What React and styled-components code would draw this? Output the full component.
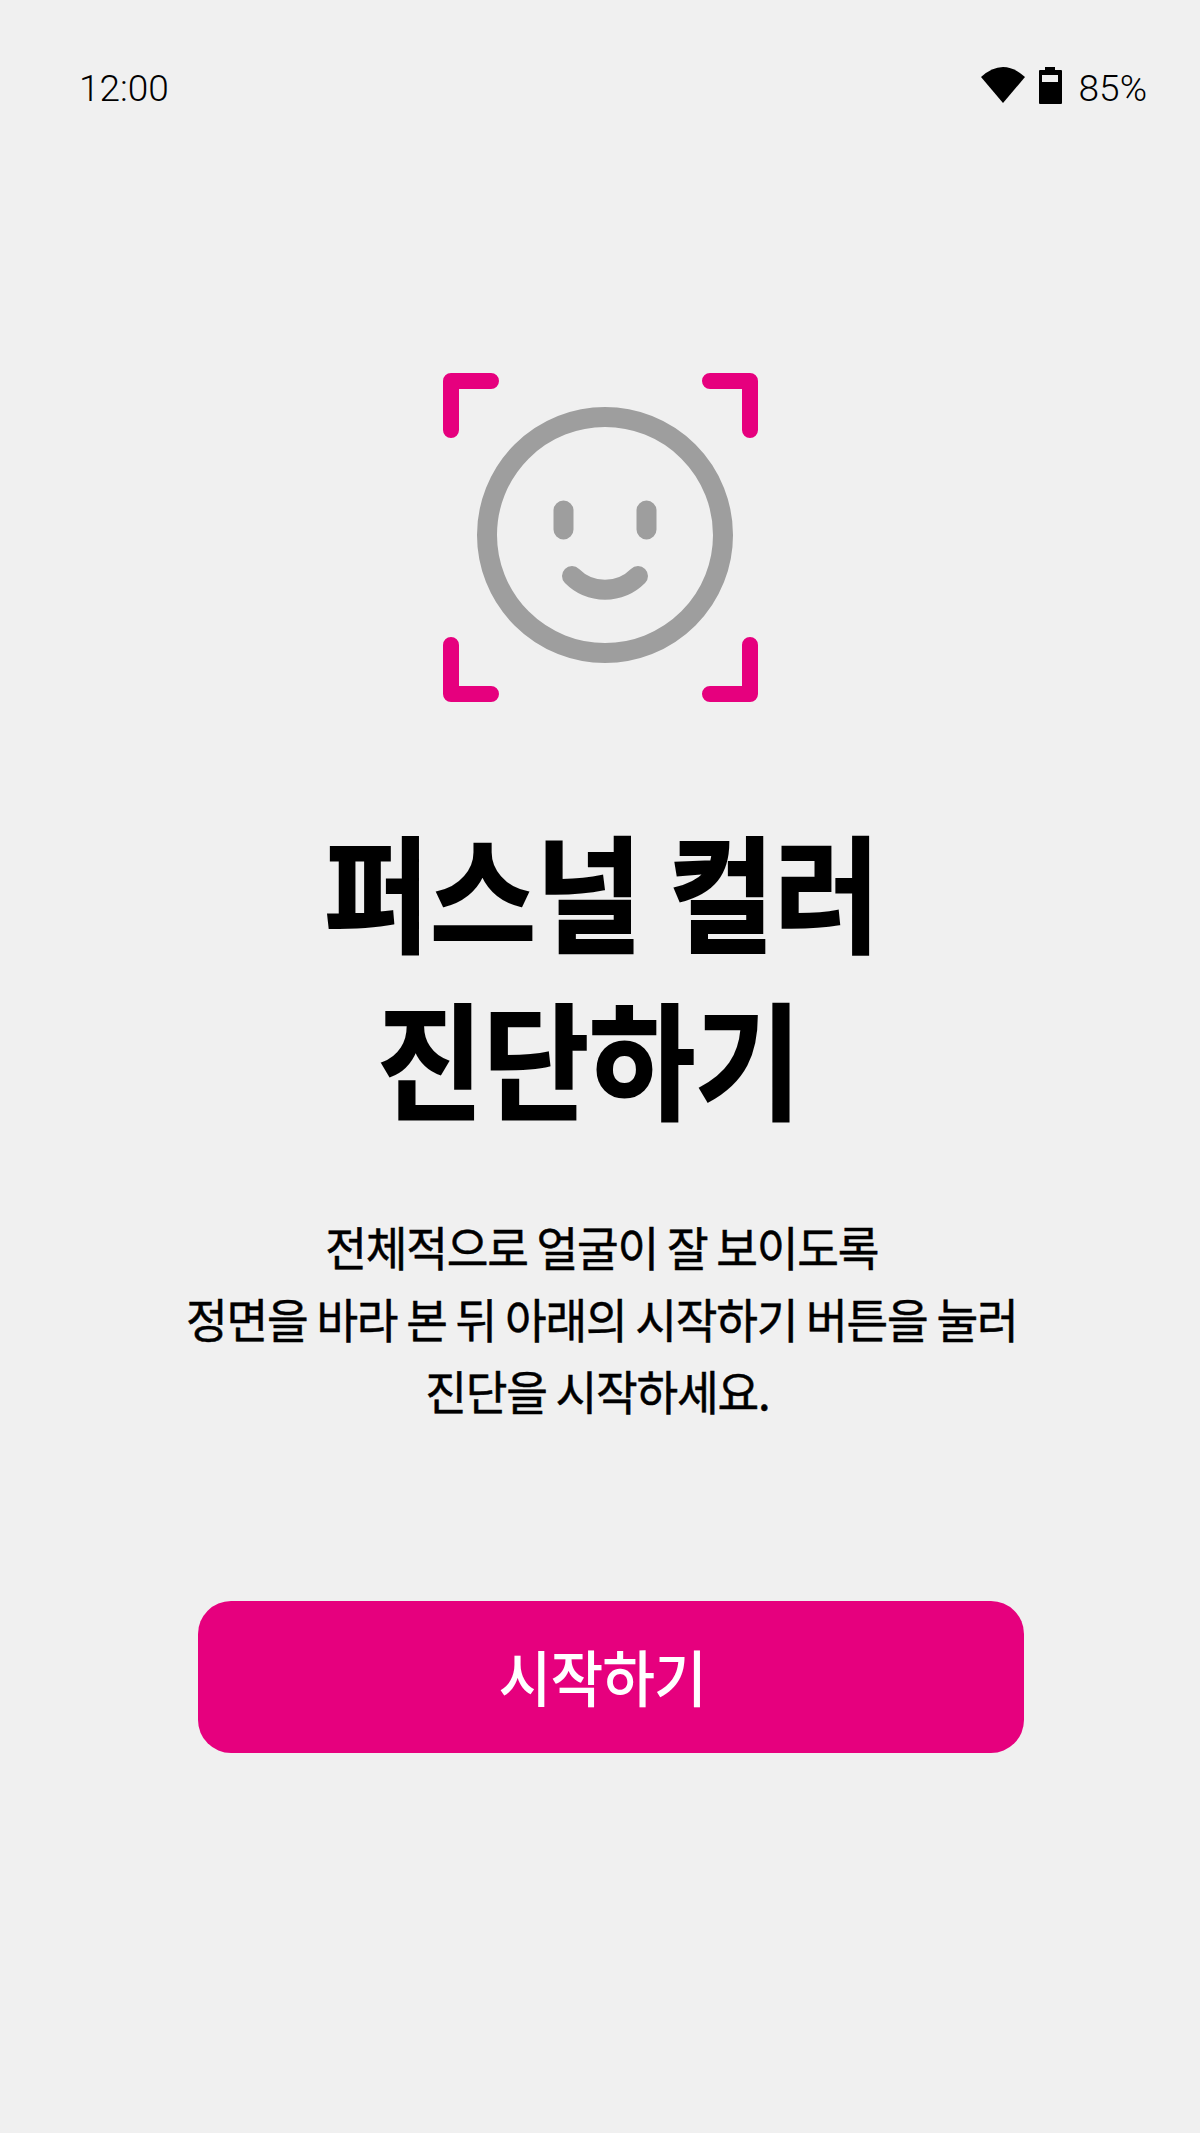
import React from "react";
import styled, { createGlobalStyle } from "styled-components";

const Global = createGlobalStyle`
  html, body { margin: 0; padding: 0; background: #f0f0f0; }
  * { box-sizing: border-box; }
`;
const FONT = `"Noto Sans CJK KR", "Noto Sans", sans-serif`;
const Screen = styled.div`
  width: 1200px; height: 2133px; background: #f0f0f0; display: flex; flex-direction: column; align-items: center; font-family: ${FONT}; color: #000; overflow: hidden;
`;
const StatusBar = styled.div`
  width: 100%; height: 112px; padding: 66px 53px 0 79px; display: flex; justify-content: space-between; align-items: center; flex: none;
`;
const StatusText = styled.span`
  font-family: Roboto, sans-serif; font-size: 37px; font-weight: 300; line-height: 46px; color: #000;
`;
const StatusRight = styled.div`
  display: flex; align-items: center; gap: 14px;
`;
const StatusIcon = styled.svg`
  display: block; margin-bottom: 8px; margin-right: ${(p) => p.$trail || 0}px;
`;
const FaceWrap = styled.div`
  margin: 261px 0 0 2px; flex: none; line-height: 0;
`;
const Title = styled.h1`
  margin: 102px 0 0 5px; font-size: 126px; font-weight: 700; -webkit-text-stroke: 2px #000; line-height: 167px; text-align: center; white-space: nowrap; transform: scaleX(0.915);
`;
const Body = styled.p`
  margin: 71px 0 0 3px; font-size: 47px; font-weight: 400; -webkit-text-stroke: 0.5px #000; line-height: 72px; text-align: center; white-space: nowrap; letter-spacing: -1.3px; transform: scaleX(0.965);
`;
const Start = styled.button`
  margin: 175px 0 0 22px; width: 826px; height: 152px; border: 0; border-radius: 33px; background: #e6007e; color: #fff; font-family: ${FONT}; font-size: 61px; font-weight: 500; letter-spacing: -1px; padding: 0 17px 4px 0;
`;
const StartLabel = styled.span`
  display: inline-block; transform: scaleX(0.94);
`;

const Face = () => (
  <svg width="316" height="330" viewBox="443 373 316 330" fill="none">
    <g stroke="#e6007e" strokeWidth="16" strokeLinecap="round" strokeLinejoin="round">
      <path d="M451 430V381H491" />
      <path d="M710 381H750V430" />
      <path d="M451 645V694H491" />
      <path d="M710 694H750V645" />
    </g>
    <g stroke="#9e9e9e" fill="none" strokeLinecap="round" strokeWidth="20">
      <circle cx="605" cy="535" r="118" />
      <path d="M563.500 510.500V529.500M646.500 510.500V529.500" />
      <path d="M572 576A46.600 46.600 0 0 0 638 576" />
    </g>
  </svg>
);

export default function App() {
  return (
    <Screen>
      <Global />
      <StatusBar>
        <StatusText>12:00</StatusText>
        <StatusRight>
          <StatusIcon width="44" height="36" viewBox="0 0 44 36"><path d="M0 10Q22 -10 44 10L22 36Z" fill="#000" /></StatusIcon>
          <StatusIcon $trail={3} width="23" height="37" viewBox="0 0 23 37"><path d="M6 0H16V3H22A1 1 0 0 1 23 4V36A1 1 0 0 1 22 37H1A1 1 0 0 1 0 36V4A1 1 0 0 1 1 3H6ZM3 8V15H19V8Z" fill="#000" fillRule="evenodd" /></StatusIcon>
          <StatusText>85%</StatusText>
        </StatusRight>
      </StatusBar>
      <FaceWrap><Face /></FaceWrap>
      <Title>퍼스널 컬러<br />진단하기&nbsp;</Title>
      <Body>전체적으로 얼굴이 잘 보이도록<br />정면을 바라 본 뒤 아래의 시작하기 버튼을 눌러<br />진단을 시작하세요.&nbsp;</Body>
      <Start><StartLabel>시작하기</StartLabel></Start>
    </Screen>
  );
}
